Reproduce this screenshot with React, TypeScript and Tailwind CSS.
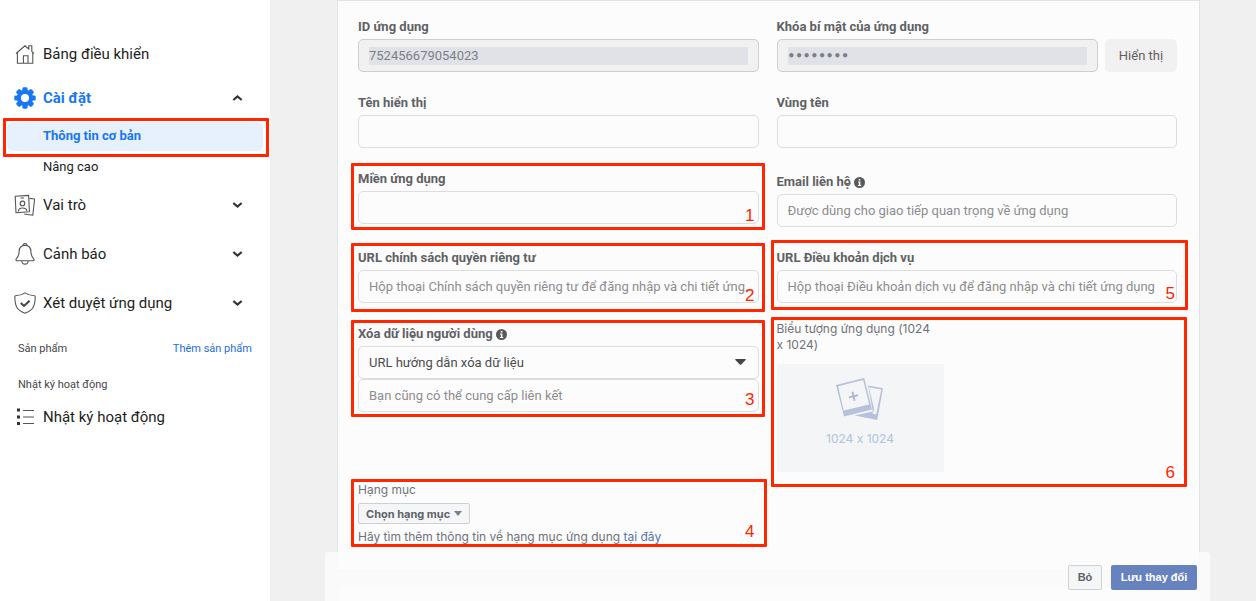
import { useState, type ReactNode } from "react";
import clsx from "clsx";

const BOX = "h-[33px] w-full rounded-[5px] border border-[#dcdddf] bg-[#fcfcfc] text-[13px] text-[#4b4c4f]";

const Callout = ({ label, className }: { label?: string; className: string }) => (
  <span
    className={clsx(
      "pointer-events-none absolute flex items-end justify-end rounded-[1px] border-3 border-[#ff2600] font-['Liberation_Sans',Arial,sans-serif] text-[17px] leading-none text-[#ff2600]",
      className
    )}
  >
    {label}
  </span>
);

const HomeIcon = () => (
  <svg width="22" height="22" viewBox="0 0 22 22" fill="none" stroke="#555" strokeWidth="1.1">
    <path d="M2 10.5 11 2.8 14.8 6V2.8h3V8.6L20 10.5" />
    <path d="M3.4 9.6v10.6h15.4V9.6M9.4 20v-7.2h4.6V20" />
  </svg>
);

const GearIcon = () => (
  <svg width="22" height="22" viewBox="0 0 22 22">
    <g fill="#1877f2">
      {[0, 45, 90, 135].map((angle) => (
        <rect key={angle} x="8.4" y="0.3" width="5.2" height="21.4" rx="1.4" transform={`rotate(${angle} 11 11)`} />
      ))}
      <circle cx="11" cy="11" r="8.2" />
    </g>
    <circle cx="11" cy="11" r="4" fill="#fff" />
  </svg>
);

const RolesIcon = () => (
  <svg width="22" height="22" viewBox="0 0 22 22" fill="none" stroke="#555" strokeWidth="1.1">
    <path d="M1.2 2.2 14.6 1.4l.8 16.4L2 18.8z" strokeLinejoin="round" />
    <path d="m15.6 4.4 5 .6-1.8 16.2-8.6-1.2" strokeLinejoin="round" />
    <path d="M6.5 4h3.4" />
    <circle cx="8.5" cy="9.4" r="2.3" />
    <path d="M4.4 17.4c0-2.6 1.8-3.4 4.1-3.4s4.3.8 4.3 3.2" />
  </svg>
);

const BellIcon = () => (
  <svg width="22" height="22" viewBox="0 0 22 22" fill="none" stroke="#555" strokeWidth="1.1">
    <path d="M11 2.4c-4 0-5.8 2.8-5.9 6.2-.1 4.2-1.3 5.7-2.7 7-.8.8-.5 2.2.8 2.2h15.6c1.3 0 1.6-1.4.8-2.2-1.4-1.3-2.6-2.8-2.7-7C16.8 5.2 15 2.4 11 2.4z" />
    <path d="M8.8 2.6c.2-2.6 4.2-2.6 4.4 0M7.8 18c.3 4.2 6.1 4.2 6.4 0" />
  </svg>
);

const ShieldIcon = () => (
  <svg width="22" height="22" viewBox="0 0 22 22" fill="none" stroke="#555" strokeWidth="1.1">
    <path d="M11 .9C8.6 2.6 5 3.6 1.4 3.8c-.5 0-.6.3-.6.7.1 8.5 1.5 14 10.2 16.7 8.7-2.7 10.1-8.2 10.2-16.7 0-.4-.1-.7-.6-.7C17 3.6 13.4 2.6 11 .9z" />
    <path d="m6.8 11 3.2 3 5.6-5.2" stroke="#444" strokeWidth="2" />
  </svg>
);

const ListIcon = () => (
  <svg width="22" height="22" viewBox="0 0 22 22">
    <path d="M3 2.5h3v3H3zM3 9.500h3v3H3zM3 16h3v3H3z" fill="#333" />
    <path d="M9 4.5h11M9 11h11M9 17.5h11" stroke="#555" strokeWidth="1.2" />
  </svg>
);

const Chevron = ({ up = false }: { up?: boolean }) => (
  <svg width="11" height="8" viewBox="0 0 11 8" fill="none" stroke="#333" strokeWidth="2.2">
    <path d={up ? "M1.3 6 5.5 2.4 9.7 6" : "M1.3 2 5.5 5.6 9.7 2"} />
  </svg>
);

const InfoIcon = () => (
  <svg width="11" height="11" viewBox="0 0 11 11">
    <circle cx="5.5" cy="5.5" r="5.5" fill="#58595b" />
    <path d="M4.7 1.9h1.7v1.6H4.7zM4 4.5h2.4v3.4h.8v1H3.9v-1h.9V5.5H4z" fill="#fcfcfc" />
  </svg>
);

const PhotosIcon = () => (
  <svg width="48" height="44" viewBox="0 0 48 44">
    <path
      fillRule="evenodd"
      d="M32 7.6 47 10.2 41.2 42 18.6 37.6 36.8 33.5zM32.8 9.2 38.2 31.2 36.5 35.8 40.2 36.5 45.2 11.4z"
      fill="#b6c1dc"
    />
    <path fillRule="evenodd" d="M0 7 28.2 0 36 31.4 8 38.4zM2.1 8.3 7.6 32.6 33.2 26.4 27.2 2.1z" fill="#b6c1dc" />
    <path d="m16.4 13.8 2.2 9M13 19.4l9-2.2" stroke="#a9b5d3" strokeWidth="1.8" />
  </svg>
);

interface NavItemProps {
  icon: ReactNode;
  label: string;
  active?: boolean;
  chevron?: "up" | "down";
}

const NavItem = ({ icon, label, active, chevron }: NavItemProps) => (
  <button
    type="button"
    className={clsx(
      "flex h-6 w-full items-center pr-[27px] pl-3.5 text-left text-[15px]",
      active ? "font-bold text-[#1877f2]" : "text-[#1c1e21]"
    )}
  >
    {icon}
    <span className="ml-[7px] flex-1">{label}</span>
    {chevron && <Chevron up={chevron === "up"} />}
  </button>
);

const Sidebar = () => (
  <nav className="w-[270px] shrink-0 bg-white pt-[42px]">
    <NavItem icon={<HomeIcon />} label="Bảng điều khiển" />
    <div className="mt-5">
      <NavItem icon={<GearIcon />} label="Cài đặt" active chevron="up" />
    </div>
    <div className="relative mx-[7px] mt-3 h-[29px]">
      <a
        href="#basic"
        className="flex h-full items-center rounded-md bg-[#e7f0fd] pb-0.5 pl-9 text-[13px] font-bold text-[#1877f2]"
      >
        Thông tin cơ bản
      </a>
      <Callout className="-top-1 -right-[6px] -bottom-[6px] -left-1" />
    </div>
    <a href="#advanced" className="mt-1.5 flex h-5 items-center pl-[43px] text-[13px] text-[#1c1e21]">
      Nâng cao
    </a>
    <div className="mt-4 flex flex-col gap-[25px]">
      <NavItem icon={<RolesIcon />} label="Vai trò" chevron="down" />
      <NavItem icon={<BellIcon />} label="Cảnh báo" chevron="down" />
      <NavItem icon={<ShieldIcon />} label="Xét duyệt ứng dụng" chevron="down" />
    </div>
    <div className="mt-6 flex h-5 items-center justify-between px-[18px] text-[11px]">
      <span className="text-[#444549]">Sản phẩm</span>
      <a href="#add" className="text-[#216fdb]">
        Thêm sản phẩm
      </a>
    </div>
    <div className="mt-4 flex h-5 items-center pl-[18px] text-[11px] text-[#444549]">Nhật ký hoạt động</div>
    <div className="mt-2.5">
      <NavItem icon={<ListIcon />} label="Nhật ký hoạt động" />
    </div>
  </nav>
);

interface FieldProps {
  id: string;
  label: string;
  info?: boolean;
  callout?: ReactNode;
  className?: string;
  children: ReactNode;
}

const Field = ({ id, label, info, callout, className, children }: FieldProps) => (
  <div className={clsx("relative", className)}>
    <label
      htmlFor={id}
      className="flex h-[21px] items-center gap-[3px] pb-[3px] text-[13px] leading-[18px] font-bold text-[#606164]"
    >
      {label}
      {info && <InfoIcon />}
    </label>
    {children}
    {callout}
  </div>
);

interface ReadOnlyBoxProps {
  id: string;
  value: string;
  secret?: boolean;
}

const ReadOnlyBox = ({ id, value, secret }: ReadOnlyBoxProps) => (
  <div className="flex h-[33px] min-w-0 flex-1 items-center rounded-[5px] border border-[#ccced0] bg-[#f1f1f1] px-2.5">
    <input
      id={id}
      type={secret ? "password" : "text"}
      value={value}
      readOnly
      className={clsx(
        "h-[18px] w-full min-w-0 bg-[#e1e2e7] text-[#7c7f88]",
        secret ? "font-['DejaVu_Sans',sans-serif] text-[12px] font-bold" : "text-[13px]"
      )}
    />
  </div>
);

const PLACEHOLDER = "pl-2.5 pr-0.5 text-ellipsis placeholder:text-[#8c8d90]";

const App = () => {
  const [deletion, setDeletion] = useState("url");

  return (
    <div className="flex min-h-screen bg-[#f0f0f0] font-[Roboto,sans-serif]">
      <Sidebar />
      <main className="min-w-0 flex-1 pr-[46px] pl-[55px]">
        <div className="mr-2.5 ml-3">
          <section className="grid h-[571px] grid-cols-2 gap-x-[18px] border border-[#e3e4e6] bg-[#fcfcfc] pt-[17px] pr-[22px] pl-5">
            <div>
              <Field id="app-id" label="ID ứng dụng">
                <ReadOnlyBox id="app-id" value="752456679054023" />
              </Field>
              <Field id="display-name" label="Tên hiển thị" className="mt-[22px]">
                <input id="display-name" className={clsx(BOX, "px-2.5")} />
              </Field>
              <Field
                id="domains"
                label="Miền ứng dụng"
                className="mt-[22px]"
                callout={<Callout label="1" className="-top-[7px] -right-[6px] -bottom-[6px] -left-[7px] pr-[7px] pb-[3px]" />}
              >
                <input id="domains" className={clsx(BOX, "px-2.5")} />
              </Field>
              <Field
                id="privacy"
                label="URL chính sách quyền riêng tư"
                className="mt-[25px]"
                callout={<Callout label="2" className="-top-[6px] -right-[6px] -bottom-[9px] -left-[7px] pr-[7px] pb-[5px]" />}
              >
                <input
                  id="privacy"
                  className={clsx(BOX, PLACEHOLDER)}
                  placeholder="Hộp thoại Chính sách quyền riêng tư để đăng nhập và chi tiết ứng dụng"
                />
              </Field>
              <Field
                id="deletion"
                label="Xóa dữ liệu người dùng"
                info
                className="mt-[22px]"
                callout={<Callout label="3" className="-top-[5px] -right-[6px] -bottom-[5px] -left-[7px] pr-[7px] pb-1.5" />}
              >
                <div className="relative">
                  <select
                    id="deletion"
                    value={deletion}
                    onChange={(e) => setDeletion(e.target.value)}
                    className={clsx(BOX, "appearance-none px-2.5")}
                  >
                    <option value="url">URL hướng dẫn xóa dữ liệu</option>
                    <option value="callback">URL gọi lại xóa dữ liệu</option>
                  </select>
                  <svg className="pointer-events-none absolute top-[13px] right-[13px]" width="11" height="6" viewBox="0 0 11 6">
                    <path d="M.8 0h9.4q1 .2.4 1L6.2 5.6q-.7.6-1.4 0L.4 1Q-.2.2.8 0z" fill="#444548" />
                  </svg>
                </div>
                <input
                  aria-label="Liên kết"
                  className={clsx(BOX, PLACEHOLDER)}
                  placeholder="Bạn cũng có thể cung cấp liên kết"
                />
              </Field>
              <div className="relative mt-[70px] font-[Inter,sans-serif] text-[12px] leading-4 text-[#6f7279]">
                <p>Hạng mục</p>
                <button
                  type="button"
                  className="my-[5px] flex h-[21px] items-center gap-1 rounded-[2px] border border-[#ced0d4] bg-[#f5f6f7] px-[7px] text-[11px] font-bold text-[#606369]"
                >
                  Chọn hạng mục
                  <svg width="8" height="5" viewBox="0 0 8 5">
                    <path d="M0 0h8L4 5z" fill="#7c7f88" />
                  </svg>
                </button>
                <p>
                  Hãy tìm thêm thông tin về hạng mục ứng dụng{" "}
                  <a href="#categories" className="text-[#5673b3]">
                    tại đây
                  </a>
                </p>
                <Callout label="4" className="-top-[3px] -right-2 -bottom-0.5 -left-[7px] pr-[9px] pb-1" />
              </div>
            </div>

            <div>
              <Field id="secret" label="Khóa bí mật của ứng dụng">
                <div className="flex gap-[7px]">
                  <ReadOnlyBox id="secret" value="secret00" secret />
                  <button type="button" className="h-[33px] w-[72px] rounded-[5px] bg-[#f1f1f1] text-[13px] text-[#606164]">
                    Hiển thị
                  </button>
                </div>
              </Field>
              <Field id="namespace" label="Vùng tên" className="mt-[22px]">
                <input id="namespace" className={clsx(BOX, "px-2.5")} />
              </Field>
              <Field id="email" label="Email liên hệ" info className="mt-[25px]">
                <input
                  id="email"
                  className={clsx(BOX, PLACEHOLDER)}
                  placeholder="Được dùng cho giao tiếp quan trọng về ứng dụng"
                />
              </Field>
              <Field
                id="terms"
                label="URL Điều khoản dịch vụ"
                className="mt-[22px]"
                callout={<Callout label="5" className="-top-[9px] -right-[11px] -bottom-[7px] -left-[6px] pr-2.5 pb-[5px]" />}
              >
                <input
                  id="terms"
                  className={clsx(BOX, PLACEHOLDER)}
                  placeholder="Hộp thoại Điều khoản dịch vụ để đăng nhập và chi tiết ứng dụng"
                />
              </Field>
              <div className="relative mt-[18px] font-[Inter,sans-serif] text-[12px] leading-4 text-[#6f7279] [font-feature-settings:'calt'_0]">
                <p className="w-[167px]">
                  Biểu tượng ứng dụng (1024
                  <br />x 1024)
                </p>
                <button
                  type="button"
                  className="mt-[11px] flex h-[108px] w-[167px] flex-col items-center bg-[#f4f5f7] pt-3.5 text-[#b0c4e2]"
                >
                  <PhotosIcon />
                  <span className="mt-[9px]">1024 x 1024</span>
                </button>
                <Callout label="6" className="-top-1 -right-2.5 -bottom-[15px] -left-[6px] pr-[9px] pb-[3px]" />
              </div>
            </div>
          </section>
          <section className="mt-4 h-3.5 rounded-t-md bg-white" />
        </div>
        <footer className="sticky bottom-0 -mt-[49px] flex h-[49px] items-center justify-end gap-[9px] rounded-t-[3px] bg-[#fcfcfc]/85 pt-0.5 pr-[13px] font-['Liberation_Sans',Arial,sans-serif] text-[11px] font-bold">
          <button type="button" className="h-[25px] w-[34px] rounded-[2px] border border-[#ced0d4] bg-[#f5f6f7] text-[#606369]">
            Bỏ
          </button>
          <button type="button" className="h-[25px] w-[86px] rounded-[2px] bg-[#6783bf] text-white">
            Lưu thay đổi
          </button>
        </footer>
      </main>
    </div>
  );
};

export default App;
